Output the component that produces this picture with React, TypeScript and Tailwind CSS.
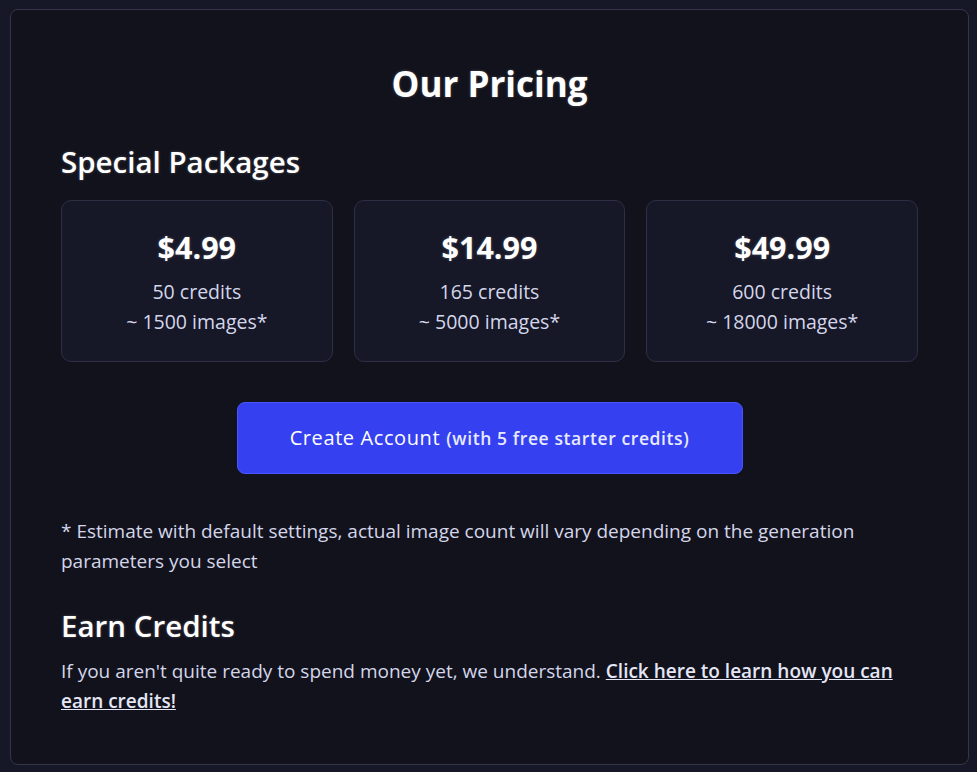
import React from "react";

const packages = [
  { price: "$4.99", credits: "50 credits", images: "~ 1500 images*" },
  { price: "$14.99", credits: "165 credits", images: "~ 5000 images*" },
  { price: "$49.99", credits: "600 credits", images: "~ 18000 images*" },
];

const glow = "[text-shadow:0_0_3px_rgba(255,255,255,0.25)]";

export default function App() {
  return (
    <div
      className="min-h-screen bg-[#171827] pt-[9px] pl-[10px] pr-[8px] pb-[7px]"
      style={{ fontFamily: '"Open Sans", "Noto Sans", sans-serif' }}
    >
      <div className="h-[756px] rounded-lg border border-[#34354a] bg-[#12121c] px-[50px] pt-[48px]">
        <h1 className={`text-center text-[35px] font-bold leading-[52px] text-white ${glow}`}>
          Our Pricing
        </h1>

        <h2 className={`mt-[32px] text-[29.5px] font-semibold leading-[40px] text-white ${glow}`}>
          Special Packages
        </h2>

        {/* Packages */}
        <div className="mt-[18px] grid grid-cols-3 gap-[21px]">
          {packages.map((p) => (
            <div
              key={p.price}
              className="flex h-[162px] flex-col items-center rounded-[10px] border border-[#2e2f44] bg-[#161727] pt-[26px]"
            >
              <div className={`text-[30.5px] font-bold leading-[40px] text-white ${glow}`}>{p.price}</div>
              <div className="mt-[10px] text-[19.5px] leading-[30px] text-[#d4d6ea]">{p.credits}</div>
              <div className="text-[19.5px] leading-[30px] text-[#d4d6ea]">{p.images}</div>
            </div>
          ))}
        </div>

        <div className="mt-[40px] flex justify-center">
          <button className="flex h-[72px] w-[506px] items-center justify-center rounded-lg border border-[#4b55ff] bg-[#3541f0] text-white">
            <span className="text-[20px] tracking-[0.6px]">Create Account</span>
            <span className="ml-[6px] text-[17.5px] font-semibold tracking-[0.6px] text-[#e8eaff]">
              (with 5 free starter credits)
            </span>
          </button>
        </div>

        <p className="mt-[42px] text-[19px] leading-[30px] text-[#d4d6ea]">
          * Estimate with default settings, actual image count will vary depending on the generation
          parameters you select
        </p>

        <h2 className={`mt-[30px] text-[29.5px] font-semibold leading-[40px] text-white ${glow}`}>
          Earn Credits
        </h2>
        <p className="mt-[10px] text-[19px] leading-[30px] text-[#d4d6ea]">
          If you aren't quite ready to spend money yet, we understand.{" "}
          <a href="#" className="font-semibold text-[#e4e6f6] underline">
            Click here to learn how you can earn credits!
          </a>
        </p>
      </div>
    </div>
  );
}
